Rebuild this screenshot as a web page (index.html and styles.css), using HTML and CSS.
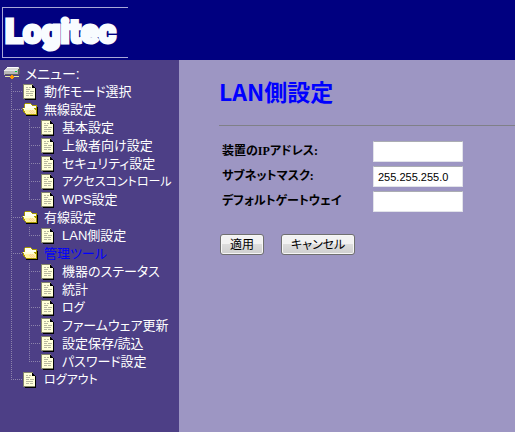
FILE: index.html
```html
<!DOCTYPE html>
<html lang="ja">
<head>
    <meta charset="UTF-8">
    <meta name="viewport" content="width=device-width, initial-scale=1.0">
    <title>LAN側設定</title>
    <link rel="stylesheet" href="styles.css">
</head>
<body>
    <!-- shared menu icons -->
    <svg class="sprite" aria-hidden="true">
        <symbol id="doc" viewBox="0 0 16 16">
            <path fill="#000" d="M3 15h11V4h-1v10H3z M10 1h1v1h1v1h1v1h1v1h-4z"/>
            <path fill="#ffffd8" d="M2 1h8v3h3v11H2z"/>
            <path fill="#84846c" d="M1 0h10v1H2v14H1z M2 14h11v1H2z"/>
            <path fill="#000" d="M13 4h1v12H3v-1h10z"/>
            <path fill="#b8b8a0" d="M4 3h2v1H4z M7 3h2v1H7z M4 5h4v1H4z M4 7h3v1H4z M8 7h4v1H8z M4 9h7v1H4z M4 11h3v1H4z M8 11h3v1H8z"/>
        </symbol>
        <symbol id="folder" viewBox="0 0 16 16">
            <path fill="#000" d="M4 13h11V5h1v9H4z"/>
            <path fill="#a89800" d="M3 1h5l2 2h4l1 1v9H4L2 11 0 6h2V2z"/>
            <path fill="#fffff0" d="M3 2h5l2 2h4v2H3z"/>
            <path fill="#fff4a0" d="M1 6h11l2 3v3H4z"/>
            <path fill="#ffffd8" d="M1 6h11v2H2z"/>
            <path fill="#ffcf98" d="M8 8h1v1H8z M10 8h1v1h-1z M7 9h1v1H7z M9 9h1v1H9z M11 9h1v1h-1z M8 10h1v1H8z M10 10h1v1h-1z M12 10h1v1h-1z M9 11h1v1H9z M11 11h1v1h-1z"/>
        </symbol>
        <symbol id="drive" viewBox="0 0 16 16">
            <path fill="#d8d8d8" d="M3 1h12v1l-2 2H1z"/>
            <path fill="#fff" d="M3 1h11v1H3z"/>
            <path fill="#b8b8b8" d="M0 4h14v5H0z"/>
            <path fill="#e8e8e8" d="M0 4h13v1H0z"/>
            <path fill="#606060" d="M14 3l2-2v6l-2 2z M1 8h13v1H1z"/>
            <path fill="#00c840" d="M11 5h2v1h-2z"/>
            <path fill="#e8e8a8" d="M1 10h14v1H1z"/>
            <path fill="#ff9800" d="M7 9h2v1h1v2H9v1H7v-1H6v-2h1z"/>
        </symbol>
    </svg>

    <header class="header">
        <div class="logo">Logitec</div>
    </header>

    <div class="page">
        <nav class="sidebar">
            <div class="item root"><svg class="icon"><use href="#drive"/></svg>メニュー:</div>
            <ul class="tree">
                <li><a class="item" href="#"><svg class="icon"><use href="#doc"/></svg>動作モード選択</a></li>
                <li>
                    <a class="item" href="#"><svg class="icon"><use href="#folder"/></svg>無線設定</a>
                    <ul>
                        <li><a class="item" href="#"><svg class="icon"><use href="#doc"/></svg>基本設定</a></li>
                        <li><a class="item" href="#"><svg class="icon"><use href="#doc"/></svg>上級者向け設定</a></li>
                        <li><a class="item" href="#"><svg class="icon"><use href="#doc"/></svg>セキュリティ設定</a></li>
                        <li><a class="item kana" href="#"><svg class="icon"><use href="#doc"/></svg>アクセスコントロール</a></li>
                        <li><a class="item" href="#"><svg class="icon"><use href="#doc"/></svg>WPS設定</a></li>
                    </ul>
                </li>
                <li>
                    <a class="item" href="#"><svg class="icon"><use href="#folder"/></svg>有線設定</a>
                    <ul>
                        <li><a class="item" href="#"><svg class="icon"><use href="#doc"/></svg>LAN側設定</a></li>
                    </ul>
                </li>
                <li>
                    <a class="item active" href="#"><svg class="icon"><use href="#folder"/></svg>管理ツール</a>
                    <ul>
                        <li><a class="item" href="#"><svg class="icon"><use href="#doc"/></svg>機器のステータス</a></li>
                        <li><a class="item" href="#"><svg class="icon"><use href="#doc"/></svg>統計</a></li>
                        <li><a class="item kana" href="#"><svg class="icon"><use href="#doc"/></svg>ログ</a></li>
                        <li><a class="item" href="#"><svg class="icon"><use href="#doc"/></svg>ファームウェア更新</a></li>
                        <li><a class="item" href="#"><svg class="icon"><use href="#doc"/></svg>設定保存/読込</a></li>
                        <li><a class="item" href="#"><svg class="icon"><use href="#doc"/></svg>パスワード設定</a></li>
                    </ul>
                </li>
                <li><a class="item kana" href="#"><svg class="icon"><use href="#doc"/></svg>ログアウト</a></li>
            </ul>
        </nav>

        <main class="content">
            <h1>LAN側設定</h1>
            <hr>
            <form>
                <div class="fields">
                    <label for="ip">装置のIPアドレス:</label>
                    <input type="text" id="ip" name="ip">
                    <label for="mask">サブネットマスク:</label>
                    <input type="text" id="mask" name="mask" value="255.255.255.0">
                    <label for="gateway">デフォルトゲートウェイ</label>
                    <input type="text" id="gateway" name="gateway">
                </div>
                <div class="buttons">
                    <button type="submit">適用</button>
                    <button type="reset">キャンセル</button>
                </div>
            </form>
        </main>
    </div>
</body>
</html>
```
FILE: styles.css
```css
* {
    box-sizing: border-box;
}
body {
    margin: 0;
    min-height: 100vh;
    display: flex;
    flex-direction: column;
    font-family: "Liberation Sans", "Noto Sans CJK JP", sans-serif;
    font-size: 13px;
    font-feature-settings: "palt";
}
.sprite {
    display: none;
}
.header {
    background-color: #000080;
    height: 60px;
    padding: 7px 2px;
}
.logo {
    width: 126px;
    height: 51px;
    padding-left: 2px;
    border: 1px solid #a8a8d8;
    border-right: none;
    color: #f8fcff;
    font-family: Roboto, sans-serif;
    font-weight: 900;
    font-size: 33px;
    line-height: 48px;
    -webkit-text-stroke: 3px #f8fcff;
}
.page {
    flex: 1;
    display: flex;
}

/* menu tree */
.sidebar {
    width: 179px;
    flex-shrink: 0;
    padding: 5px 0 0 4px;
    background-color: #4d3f86;
}
.sidebar ul {
    list-style: none;
    margin: 0;
    padding: 0;
}
.sidebar .tree {
    margin-left: 7px;
}
.sidebar li ul {
    margin-left: 7px;
}
.sidebar li {
    padding-left: 11px;
    background-image:
        repeating-linear-gradient(to bottom, #8d84ac 0 1px, transparent 1px 2px),
        repeating-linear-gradient(to right, #8d84ac 0 1px, transparent 1px 2px);
    background-size: 1px 100%, 11px 1px;
    background-position: 0 0, 0 8px;
    background-repeat: no-repeat;
}
.sidebar li:last-child {
    background-size: 1px 9px, 11px 1px;
}
.item {
    display: flex;
    align-items: center;
    gap: 6px;
    height: 18px;
    line-height: 18px;
    color: white;
    text-decoration: none;
    white-space: nowrap;
}
.item.root {
    gap: 5px;
    font-size: 14px;
}
.item.kana {
    font-size: 12px;
}
.item.active {
    color: #0000ff;
}
.icon {
    width: 16px;
    height: 16px;
    flex-shrink: 0;
    shape-rendering: crispEdges;
}

/* settings form */
.content {
    flex: 1;
    padding: 15px 0 16px 40px;
    background-color: #9d96c3;
}
h1 {
    margin: 0;
    color: #0000ff;
    font-family: "Noto Sans CJK JP", sans-serif;
    font-size: 23px;
    line-height: 32px;
    font-feature-settings: normal;
}
hr {
    margin: 18px 0 15px;
    border: none;
    border-top: 1px solid #808088;
}
.fields {
    display: grid;
    grid-template-columns: 151px 90px;
    row-gap: 4px;
    padding-left: 3px;
}
.fields label {
    font-family: "Liberation Serif", "Noto Sans CJK JP", serif;
    font-size: 12px;
    font-weight: bold;
    line-height: 20px;
}
.fields input {
    height: 21px;
    padding: 0 4px;
    border: 1px solid #e2e3ea;
    border-top-color: #abadb3;
    border-radius: 1px;
    font-family: "Liberation Sans", sans-serif;
    font-size: 11px;
}
.buttons {
    display: flex;
    gap: 17px;
    margin-top: 22px;
    padding-left: 1px;
}
button {
    height: 21px;
    padding: 0 9px;
    border: 1px solid #707070;
    border-radius: 3px;
    background: linear-gradient(#f2f2f2 50%, #dddddd 50%, #cfcfcf);
    box-shadow: inset 0 0 0 1px #f6f6f6;
    color: black;
    font-family: inherit;
    font-size: 12px;
    line-height: 18px;
    font-feature-settings: inherit;
}
```
